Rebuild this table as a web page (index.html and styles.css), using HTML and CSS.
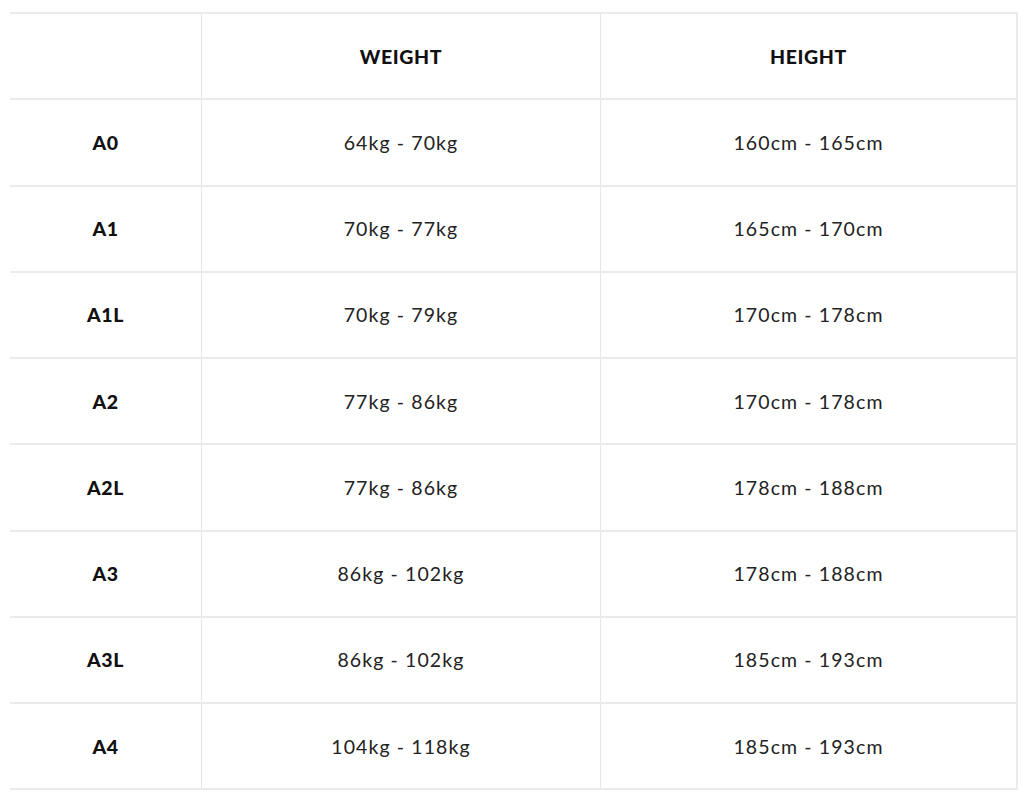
FILE: index.html
```html
<!DOCTYPE html>
<html>
<head>
<meta charset="utf-8">
<link rel="stylesheet" href="styles.css">
</head>
<body>
<table class="size-table">
  <thead>
    <tr>
      <th class="label"></th>
      <th>WEIGHT</th>
      <th class="last">HEIGHT</th>
    </tr>
  </thead>
  <tbody>
    <tr><th class="label">A0</th><td>64kg - 70kg</td><td class="last">160cm - 165cm</td></tr>
    <tr><th class="label">A1</th><td>70kg - 77kg</td><td class="last">165cm - 170cm</td></tr>
    <tr><th class="label">A1L</th><td>70kg - 79kg</td><td class="last">170cm - 178cm</td></tr>
    <tr><th class="label">A2</th><td>77kg - 86kg</td><td class="last">170cm - 178cm</td></tr>
    <tr><th class="label">A2L</th><td>77kg - 86kg</td><td class="last">178cm - 188cm</td></tr>
    <tr><th class="label">A3</th><td>86kg - 102kg</td><td class="last">178cm - 188cm</td></tr>
    <tr><th class="label">A3L</th><td>86kg - 102kg</td><td class="last">185cm - 193cm</td></tr>
    <tr><th class="label">A4</th><td>104kg - 118kg</td><td class="last">185cm - 193cm</td></tr>
  </tbody>
</table>
</body>
</html>
```

FILE: styles.css
```css
html, body {
  margin: 0;
  background: #ffffff;
}
body {
  padding: 12px 6px 0 10px;
  font-family: "Lato", "Liberation Sans", sans-serif;
  color: #1c1c1c;
}
.size-table {
  width: 1008px;
  border-collapse: collapse;
  table-layout: fixed;
  border-top: 2px solid #ebebeb;
}
.size-table th,
.size-table td {
  height: 84.25px;
  padding: 0;
  text-align: center;
  vertical-align: middle;
  border-bottom: 2px solid #ebebeb;
  border-left: 1px solid #e6e6e6;
  font-size: 19.5px;
}
.size-table th {
  font-weight: 900;
  color: #111111;
  letter-spacing: 0.6px;
}
.size-table td {
  font-weight: 400;
  color: #222222;
  letter-spacing: 1.1px;
}
.size-table .label {
  width: 191px;
  border-left: none;
}
.size-table thead th:nth-child(2) {
  width: 398px;
}
.size-table .last {
  border-right: 2px solid #ebebeb;
}
```
